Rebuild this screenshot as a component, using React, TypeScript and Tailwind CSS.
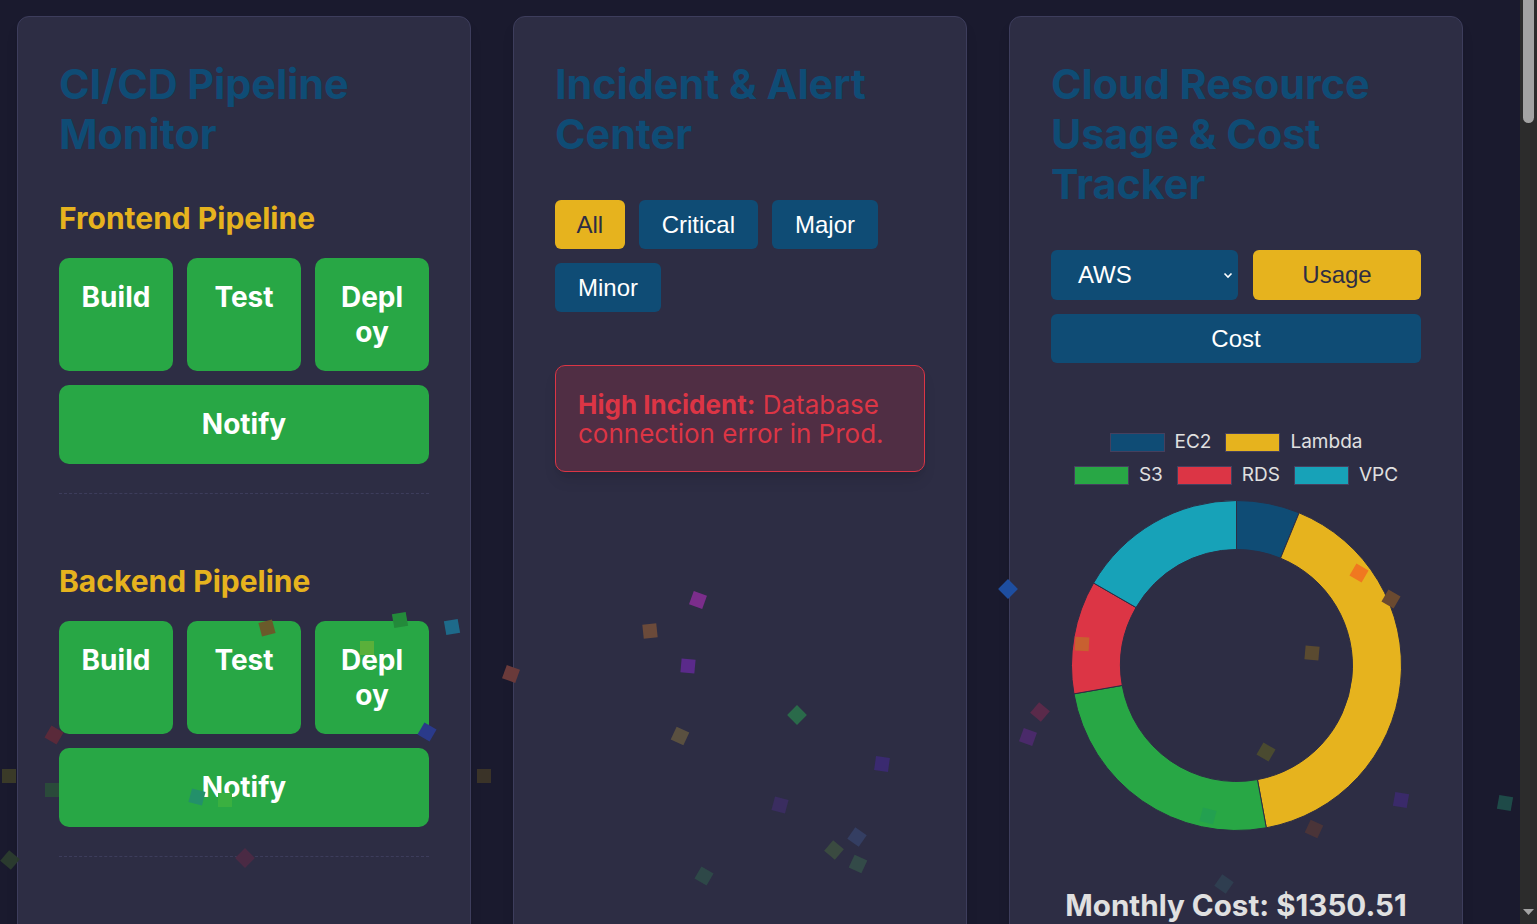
import React from "react"

const CX = 165.5
const R = 165
const r = 116

const segments = [
  { label: "EC2", color: "#0f4c75", from: 0, to: 22.3 },
  { label: "Lambda", color: "#e6b31e", from: 22.3, to: 169.6 },
  { label: "S3", color: "#28a745", from: 169.6, to: 260.1 },
  { label: "RDS", color: "#dc3545", from: 260.1, to: 300 },
  { label: "VPC", color: "#17a2b8", from: 300, to: 360 },
]

const pt = (a: number, rad: number) => {
  const t = (a * Math.PI) / 180
  return [CX + rad * Math.sin(t), CX - rad * Math.cos(t)]
}

const arcPath = (a0: number, a1: number) => {
  const [x0, y0] = pt(a0, R)
  const [x1, y1] = pt(a1, R)
  const [x2, y2] = pt(a1, r)
  const [x3, y3] = pt(a0, r)
  const large = a1 - a0 > 180 ? 1 : 0
  return `M${x0} ${y0} A${R} ${R} 0 ${large} 1 ${x1} ${y1} L${x2} ${y2} A${r} ${r} 0 ${large} 0 ${x3} ${y3} Z`
}

// confetti bits floating over the page
const confetti = [
  "left-[691px] top-[593px] bg-[#7b2d8b] rotate-[20deg]",
  "left-[643px] top-[624px] bg-[#6b4a3a] rotate-[-6deg]",
  "left-[681px] top-[659px] bg-[#5a2a8a] rotate-[5deg]",
  "left-[504px] top-[667px] bg-[#6a3a3a] rotate-[20deg]",
  "left-[790px] top-[708px] bg-[#2a6a4a] rotate-[45deg]",
  "left-[673px] top-[729px] bg-[#5a5040] rotate-[25deg]",
  "left-[875px] top-[757px] bg-[#3a2a70] rotate-[8deg]",
  "left-[773px] top-[798px] bg-[#3a2d60] rotate-[15deg]",
  "left-[850px] top-[830px] bg-[#343e62] rotate-[35deg]",
  "left-[827px] top-[843px] bg-[#3a4a40] rotate-[40deg]",
  "left-[851px] top-[857px] bg-[#334a48] rotate-[25deg]",
  "left-[697px] top-[869px] bg-[#2e4848] rotate-[30deg]",
  "left-[1001px] top-[582px] bg-[#1e4ea0] rotate-[45deg]",
  "left-[1033px] top-[705px] bg-[#5a2a4a] rotate-[40deg]",
  "left-[1021px] top-[730px] bg-[#4a2a6a] rotate-[20deg]",
  "left-[1352px] top-[566px] bg-[#f07820] rotate-[30deg]",
  "left-[1384px] top-[592px] bg-[#6a4a30] rotate-[30deg]",
  "left-[1305px] top-[646px] bg-[#5a4a30] rotate-[5deg]",
  "left-[1259px] top-[745px] bg-[#4a4a30] rotate-[30deg]",
  "left-[1394px] top-[793px] bg-[#3a2a6a] rotate-[10deg]",
  "left-[1307px] top-[822px] bg-[#4a3438] rotate-[25deg]",
  "left-[1201px] top-[809px] bg-[#23a050] rotate-[15deg]",
  "left-[1075px] top-[637px] bg-[#c86030] rotate-[3deg]",
  "left-[1217px] top-[877px] bg-[#2f3e50] rotate-[35deg]",
  "left-[1498px] top-[796px] bg-[#1e4a48] rotate-[10deg]",
  "left-[445px] top-[620px] bg-[#1e6a8a] rotate-[-10deg]",
  "left-[393px] top-[613px] bg-[#238a3a] rotate-[-10deg]",
  "left-[360px] top-[641px] bg-[#5ab03a] rotate-[0deg]",
  "left-[260px] top-[621px] bg-[#6a5a2a] rotate-[-15deg]",
  "left-[47px] top-[728px] bg-[#5a2a3a] rotate-[30deg]",
  "left-[420px] top-[725px] bg-[#2a3a8a] rotate-[30deg]",
  "left-[2px] top-[769px] bg-[#3a3a28] rotate-[0deg]",
  "left-[477px] top-[769px] bg-[#3a3328] rotate-[0deg]",
  "left-[45px] top-[783px] bg-[#2a4a3a] rotate-[0deg]",
  "left-[190px] top-[790px] bg-[#23906a] rotate-[15deg]",
  "left-[218px] top-[793px] bg-[#3ab040] rotate-[0deg]",
  "left-[3px] top-[853px] bg-[#2a3a2e] rotate-[40deg]",
  "left-[238px] top-[851px] bg-[#4a2a44] rotate-[45deg]",
]

const Card = ({ title, children }: { title: string; children: React.ReactNode }) => (
  <div className="w-[454px] min-h-[1300px] rounded-xl border border-[#3d3d5c] bg-[#2d2d44] px-[41px] pt-[42px] shadow-lg">
    <h2 className="mb-[41px] text-[41.3px] font-bold leading-[50px] text-[#0f4c75]">{title}</h2>
    {children}
  </div>
)

const Pipeline = ({ name }: { name: string }) => (
  <div className="border-b border-dashed border-[#3d3d5c] pb-[29px]">
    <h3 className="mb-[22px] text-[30px] font-bold leading-[36px] text-[#e6b31e]">{name}</h3>
    <div className="grid grid-cols-3 gap-[14px]">
      {["Build", "Test", "Deploy"].map((s) => (
        <div
          key={s}
          className="h-[113px] break-all rounded-[10px] bg-[#28a745] px-[22px] pt-[22.4px] text-center text-[28px] font-bold leading-[35px] text-white"
        >
          {s}
        </div>
      ))}
      <div className="col-span-3 flex h-[79px] items-center justify-center rounded-[10px] bg-[#28a745] text-[28px] font-bold leading-[35px] text-white">
        Notify
      </div>
    </div>
  </div>
)

const btn = "h-[49px] rounded-[6px] text-[24px] font-['Liberation_Sans',Arial,sans-serif]"

export default function App() {
  return (
    <div className="relative min-h-[1400px] overflow-hidden bg-[#1a1a2e] font-['Inter',sans-serif]">
      <div className="flex items-start gap-[42px] pl-[17px] pt-[16px]">
        <Card title="CI/CD Pipeline Monitor">
          <div className="mb-[69px]">
            <Pipeline name="Frontend Pipeline" />
          </div>
          <Pipeline name="Backend Pipeline" />
        </Card>

        <Card title="Incident & Alert Center">
          <div className="flex flex-wrap gap-[14px]">
            <button className={`${btn} px-[21.5px] bg-[#e6b31e] text-[#2d2d44]`}>All</button>
            <button className={`${btn} px-[23px] bg-[#0f4c75] text-white`}>Critical</button>
            <button className={`${btn} px-[23px] bg-[#0f4c75] text-white`}>Major</button>
            <button className={`${btn} px-[23px] bg-[#0f4c75] text-white`}>Minor</button>
          </div>
          <div className="mt-[53px] rounded-[10px] border border-[#dc3545] bg-[#502e44] px-[22px] pt-[24px] pb-[23px] text-[26px] leading-[29px] text-[#dc3545] shadow-lg">
            <span className="font-bold">High Incident:</span> Database connection error in Prod.
          </div>
        </Card>

        <Card title="Cloud Resource Usage & Cost Tracker">
          <div className="flex flex-wrap gap-x-[15px] gap-y-[14px]">
            <div className="flex h-[50px] w-[187px] items-center justify-between rounded-[6px] bg-[#0f4c75] pl-[27px] pr-[4px] text-[24px] text-white font-['Liberation_Sans',Arial,sans-serif]">
              <span>AWS</span>
              <svg width="12" height="12" viewBox="0 0 12 12" fill="none" stroke="white" strokeWidth="1.6">
                <path d="M2.5 4.5 6 8l3.5-3.5" />
              </svg>
            </div>
            <button className={`${btn} h-[50px] flex-1 px-[23px] bg-[#e6b31e] text-[#2d2d44]`}>Usage</button>
            <button className={`${btn} w-full px-[23px] bg-[#0f4c75] text-white`}>Cost</button>
          </div>

          <div className="mt-[69px] flex flex-col items-center">
            <div className="flex w-[340px] flex-wrap justify-center gap-x-[14px] gap-y-[13px]">
              {segments.map((s) => (
                <div key={s.label} className="flex h-[20px] items-center gap-[10px] text-[19px] text-[#e0e0e0]">
                  <span className="h-[19px] w-[55px] border border-[#45405e]" style={{ backgroundColor: s.color }} />
                  {s.label}
                </div>
              ))}
            </div>
            <svg className="mt-[15px]" width="331" height="331" viewBox="0 0 331 331">
              {segments.map((s) => (
                <path key={s.label} d={arcPath(s.from, s.to)} fill={s.color} stroke="#2d2d44" strokeWidth="1" />
              ))}
            </svg>
            <div className="mt-[56px] text-[29.6px] font-bold leading-[36px] text-[#e0e0e0]">Monthly Cost: $1350.51</div>
          </div>
        </Card>
      </div>

      {confetti.map((c, i) => (
        <span key={i} className={`absolute h-[14px] w-[14px] ${c}`} />
      ))}

      {/* browser scrollbar as seen in the capture */}
      <div className="fixed right-0 top-0 h-screen w-[17px] bg-[#2c2c2c]">
        <div className="ml-[3px] h-[123px] w-[11px] rounded-b-full bg-[#a3a3a3]" />
        <svg className="absolute bottom-[8px] left-[3px]" width="11" height="7" viewBox="0 0 11 7">
          <path d="M0 0h11L5.5 6z" fill="#a3a3a3" />
        </svg>
      </div>
    </div>
  )
}
